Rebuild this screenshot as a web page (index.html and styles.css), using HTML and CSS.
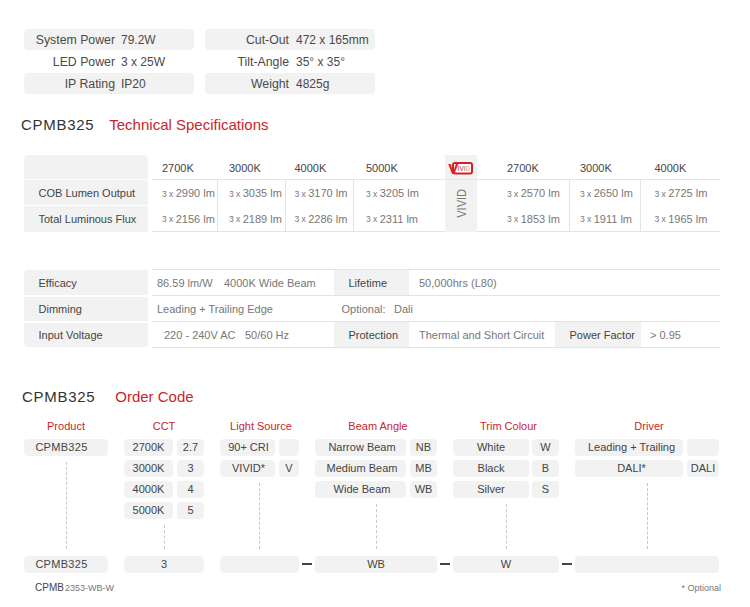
FILE: index.html
```html
<!DOCTYPE html>
<html lang="en">
<head>
<meta charset="utf-8">
<title>CPMB325</title>
<link rel="stylesheet" href="styles.css">
</head>
<body>
<main class="page">
  <section class="summary">
    <div class="summary-row shaded"><span class="summary-label">System Power</span><span>79.2W</span></div>
    <div class="summary-row shaded alt"><span class="summary-label">Cut-Out</span><span>472 x 165mm</span></div>
    <div class="summary-row"><span class="summary-label">LED Power</span><span>3 x 25W</span></div>
    <div class="summary-row alt"><span class="summary-label">Tilt-Angle</span><span>35° x 35°</span></div>
    <div class="summary-row shaded"><span class="summary-label">IP Rating</span><span>IP20</span></div>
    <div class="summary-row shaded alt"><span class="summary-label">Weight</span><span>4825g</span></div>
  </section>

  <h2 class="title title-tech"><span class="title-code">CPMB325</span><span class="title-red">Technical Specifications</span></h2>

  <section class="matrix">
    <div class="labels">
      <div class="label l-head"></div>
      <div class="label l-mid">COB Lumen Output</div>
      <div class="label l-last">Total Luminous Flux</div>
    </div>
    <div class="matrix-grid">
      <div class="head p10">2700K</div>
      <div class="head p11">3000K</div>
      <div class="head p8">4000K</div>
      <div class="head p12">5000K</div>
      <div class="vivid-head">
        <svg class="vivid-logo" viewBox="0 0 26 16" width="26" height="16" aria-hidden="true">
          <rect x="5" y="3" width="19" height="10.5" rx="2" fill="#fff" stroke="#d2202c" stroke-width="2"/>
          <text x="0.2" y="14" class="logo-v">V</text>
          <text x="9.6" y="10.8" class="logo-t"><tspan fill="#c9252c">IV</tspan><tspan fill="#5a6ab0">I</tspan><tspan fill="#e0a93a">D</tspan></text>
        </svg>
      </div>
      <div class="head p30">2700K</div>
      <div class="head p10">3000K</div>
      <div class="head p13">4000K</div>

      <div class="cell p10 bar"><small>3 x </small>2990 lm</div>
      <div class="cell p11 bar"><small>3 x </small>3035 lm</div>
      <div class="cell p8 bar"><small>3 x </small>3170 lm</div>
      <div class="cell p12"><small>3 x </small>3205 lm</div>
      <div class="vivid-side"><span>VIVID</span></div>
      <div class="cell p30 bar"><small>3 x </small>2570 lm</div>
      <div class="cell p10 bar"><small>3 x </small>2650 lm</div>
      <div class="cell p13"><small>3 x </small>2725 lm</div>

      <div class="cell last p10 bar"><small>3 x </small>2156 lm</div>
      <div class="cell last p11 bar"><small>3 x </small>2189 lm</div>
      <div class="cell last p8 bar"><small>3 x </small>2286 lm</div>
      <div class="cell last p12"><small>3 x </small>2311 lm</div>
      <div class="cell last p30 bar"><small>3 x </small>1853 lm</div>
      <div class="cell last p10 bar"><small>3 x </small>1911 lm</div>
      <div class="cell last p13"><small>3 x </small>1965 lm</div>
    </div>
  </section>

  <section class="specs">
    <div class="labels">
      <div class="label s-row">Efficacy</div>
      <div class="label s-row">Dimming</div>
      <div class="label s-row s-last">Input Voltage</div>
    </div>
    <div class="spec-rows">
      <div class="spec-row first">
        <div class="val w182"><span class="w67">86.59 lm/W</span><span>4000K Wide Beam</span></div>
        <div class="tag w75">Lifetime</div>
        <div class="val pad10">50,000hrs (L80)</div>
      </div>
      <div class="spec-row">
        <div class="val w182">Leading + Trailing Edge</div>
        <div class="val optional"><span class="w52">Optional:</span><span>Dali</span></div>
      </div>
      <div class="spec-row">
        <div class="val w182 indent"><span class="w81">220 - 240V AC</span><span>50/60 Hz</span></div>
        <div class="tag w75">Protection</div>
        <div class="val pad10 w146">Thermal and Short Circuit</div>
        <div class="tag w86">Power Factor</div>
        <div class="val pad9">&gt; 0.95</div>
      </div>
    </div>
  </section>

  <h2 class="title title-order"><span class="title-code">CPMB325</span><span class="title-red">Order Code</span></h2>

  <section class="order">
    <div class="col">
      <h3 class="col-title">Product</h3>
      <div class="opts single"><div class="pill code">CPMB325</div></div>
      <div class="link x42"></div>
      <div class="pill result code">CPMB325</div>
    </div>
    <div class="col">
      <h3 class="col-title">CCT</h3>
      <div class="opts cct">
        <div class="pill">2700K</div><div class="pill">2.7</div>
        <div class="pill">3000K</div><div class="pill">3</div>
        <div class="pill">4000K</div><div class="pill">4</div>
        <div class="pill">5000K</div><div class="pill">5</div>
      </div>
      <div class="link x40"></div>
      <div class="pill result">3</div>
    </div>
    <div class="col">
      <h3 class="col-title shift-3">Light Source</h3>
      <div class="opts source">
        <div class="pill">90+ CRI</div><div class="pill"></div>
        <div class="pill">VIVID*</div><div class="pill">V</div>
      </div>
      <div class="link x39"></div>
      <div class="pill result"></div>
    </div>
    <div class="col">
      <h3 class="col-title shift-4">Beam Angle</h3>
      <div class="opts beam">
        <div class="pill">Narrow Beam</div><div class="pill">NB</div>
        <div class="pill">Medium Beam</div><div class="pill">MB</div>
        <div class="pill">Wide Beam</div><div class="pill">WB</div>
      </div>
      <div class="link x61"></div>
      <div class="pill result dash">WB</div>
    </div>
    <div class="col">
      <h3 class="col-title shift-5">Trim Colour</h3>
      <div class="opts trim">
        <div class="pill">White</div><div class="pill">W</div>
        <div class="pill">Black</div><div class="pill">B</div>
        <div class="pill">Silver</div><div class="pill">S</div>
      </div>
      <div class="link x53"></div>
      <div class="pill result dash">W</div>
    </div>
    <div class="col">
      <h3 class="col-title shift-4">Driver</h3>
      <div class="opts driver">
        <div class="pill">Leading + Trailing</div><div class="pill"></div>
        <div class="pill">DALI*</div><div class="pill">DALI</div>
      </div>
      <div class="link x72"></div>
      <div class="pill result dash">&nbsp;</div>
    </div>
  </section>

  <footer class="foot">
    <span class="foot-code"><b>CPMB</b> 2353-WB-W</span>
    <span class="foot-note">* Optional</span>
  </footer>
</main>
</body>
</html>
```

FILE: styles.css
```css
* { box-sizing: border-box; }
html, body { margin: 0; padding: 0; background: #fff; }
body { font-family: "Liberation Sans", Arial, sans-serif; color: #444; font-size: 11px; }
.page { width: 750px; height: 607px; padding: 29px 30px 0 24px; overflow: hidden; }

.summary { display: grid; grid-template-columns: 170px 170px; column-gap: 11px; row-gap: 1px; font-size: 12px; }
.summary-row { height: 21px; line-height: 22px; display: grid; grid-template-columns: 91px auto; column-gap: 6px; justify-content: start; border-radius: 4px; color: #4a4a4a; }
.summary-row.alt { grid-template-columns: 84px auto; column-gap: 7px; }
.summary-label { text-align: right; font-size: 12.3px; }
.shaded { background: #f2f2f2; }

.title { margin: 0; font-weight: 400; font-size: 15px; line-height: 20px; height: 20px; }
.title-code { color: #333; letter-spacing: 0.7px; }
.title-red { color: #c9252c; }
.title-tech { margin: 21px 0 20px -3px; }
.title-tech .title-red { margin-left: 15px; }
.title-order { margin: 39px 0 12px -2px; }
.title-order .title-red { margin-left: 20px; }

.matrix, .specs { display: flex; gap: 4px; }
.labels { width: 124px; display: flex; flex-direction: column; gap: 1px; }
.label { background: #f2f2f2; padding-left: 14.5px; display: flex; align-items: center; color: #444; font-size: 11px; }
.l-head { height: 24px; border-radius: 4px 4px 0 0; }
.l-mid { height: 25px; }
.l-last { height: 26px; }

.matrix-grid { width: 568px; display: grid; grid-template-columns: 66px 68px 68px 91px 32px 93px 71px 79px; grid-template-rows: 25px 26px 26px; color: #777; }
.head { display: flex; align-items: center; border-bottom: 1px solid #e4e4e4; color: #444; font-size: 11px; padding-top: 1px; }
.cell { display: flex; align-items: center; white-space: pre; font-size: 11px; color: #777; }
.cell small { font-size: 8.5px; padding-top: 1px; }
.cell.last { border-bottom: 1px solid #e4e4e4; }
.bar { border-right: 1px solid #e4e4e4; }
.p8 { padding-left: 8.5px; }
.p10 { padding-left: 10px; }
.p11 { padding-left: 11px; }
.p12 { padding-left: 12px; }
.p13 { padding-left: 13.5px; }
.p30 { padding-left: 30px; }

.vivid-head { background: #f2f2f2; border-bottom: 1px solid #e9e9e9; display: flex; align-items: flex-start; padding: 5px 0 0 3px; }
.vivid-logo { display: block; overflow: visible; }
.logo-v { font-family: "Liberation Sans", Arial, sans-serif; font-weight: 700; font-size: 15px; fill: #d2202c; }
.logo-t { font-family: "Liberation Sans", Arial, sans-serif; font-weight: 400; font-size: 6.5px; }
.vivid-side { grid-row: 2 / span 2; grid-column: 5; background: #f2f2f2; display: flex; align-items: center; justify-content: center; padding-bottom: 5px; color: #777; font-size: 11px; }
.vivid-side span { writing-mode: vertical-rl; transform: rotate(180deg) scaleX(1.2); }

.specs { margin-top: 37px; }
.specs .labels { padding-top: 1px; gap: 2px; }
.specs .label { height: 24px; }
.specs .label.s-row:first-child { height: 25px; border-radius: 4px 0 0 0; }
.specs .label.s-last { border-radius: 0 0 0 4px; }
.spec-rows { width: 568px; display: flex; flex-direction: column; color: #777; }
.spec-row { display: flex; height: 26px; border-bottom: 1px solid #e4e4e4; }
.spec-row.first { height: 27px; border-top: 1px solid #e4e4e4; }
.val { display: flex; align-items: center; font-size: 11px; color: #777; white-space: pre; }
.tag { display: flex; align-items: center; padding-left: 14.5px; background: #f2f2f2; color: #444; font-size: 11px; }
.w182 { width: 182px; padding-left: 5px; }
.indent { padding-left: 12px; }
.w67 { width: 67px; }
.w52 { width: 52.5px; }
.w81 { width: 81px; }
.w75 { width: 75px; }
.w86 { width: 86px; }
.w146 { width: 146px; }
.pad10 { padding-left: 10px; }
.pad9 { padding-left: 9px; }
.optional { padding-left: 7.5px; }

.order { display: grid; grid-template-columns: 84px 80px 79px 122px 106px 144px; column-gap: 16px; height: 154px; }
.col { display: flex; flex-direction: column; min-width: 0; }
.col-title { margin: 0 0 6px; height: 14px; line-height: 14px; text-align: center; font-weight: 400; font-size: 11px; color: #c9252c; }
.shift-3 { padding-left: 3px; }
.shift-4 { padding-left: 4px; }
.shift-5 { padding-left: 5px; }
.opts { display: grid; row-gap: 4px; }
.single { grid-template-columns: 1fr; }
.cct { grid-template-columns: 49px 27px; column-gap: 4px; }
.source { grid-template-columns: 55px 20px; column-gap: 4px; }
.beam { grid-template-columns: 91px 27px; column-gap: 4px; }
.trim { grid-template-columns: 76px 27px; column-gap: 3px; }
.driver { grid-template-columns: 108px 32px; column-gap: 4px; }
.pill { height: 17px; line-height: 17px; background: #f2f2f2; border-radius: 4px; text-align: center; font-size: 11px; color: #444; white-space: nowrap; }
.code { padding-right: 9px; letter-spacing: 0.3px; }
.source .pill:nth-child(odd) { padding-left: 2px; }
.beam .pill:nth-child(odd) { padding-left: 3px; }
.driver .pill:nth-child(odd) { padding-left: 5px; }
.link { flex: 1; width: 1px; margin-top: 6px; margin-bottom: 7px; border-left: 1px dashed #c8c8c8; }
.x42 { margin-left: 42px; }
.x40 { margin-left: 40px; }
.x39 { margin-left: 39px; }
.x61 { margin-left: 61px; }
.x53 { margin-left: 53px; }
.x72 { margin-left: 72px; }
.result { position: relative; }
.dash::before { content: ""; position: absolute; left: -13px; top: 7px; width: 10px; height: 2px; background: #444; }

.foot { display: flex; justify-content: space-between; margin-top: 9px; padding-left: 11px; line-height: 12px; font-size: 9px; color: #777; }
.foot-code { word-spacing: -1.5px; }
.foot-code b { font-weight: 400; font-size: 10px; color: #444; }
.foot-note { margin-right: -1px; }
```
